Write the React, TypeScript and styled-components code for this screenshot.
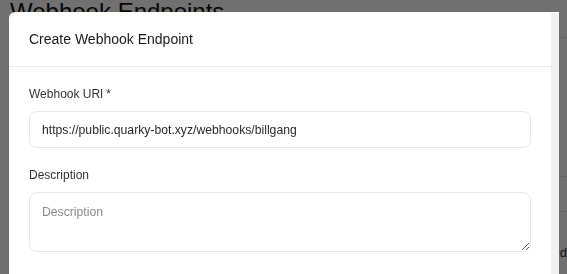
import React from "react";
import styled, { createGlobalStyle } from "styled-components";

const GlobalStyle = createGlobalStyle`
    html, body {
        margin: 0;
        padding: 0;
        background: #ffffff;
        font-family: "Liberation Sans", Arial, sans-serif;
        overflow: hidden;
    }
    * {
        box-sizing: border-box;
    }
`;

const Page = styled.div`
    width: 567px;
    height: 274px;
    padding: 0 0 0 10px;
    overflow: hidden;
    color: #111;
`;

const PageTitle = styled.h1`
    margin: 0;
    font-size: 24px;
    line-height: 24px;
    font-weight: 400;
    color: #111;
`;

const Table = styled.div`
    margin-top: 13px;
    border-top: 1px solid #e4e4e4;
`;

const TableRow = styled.div<{ $h: number }>`
    height: ${(p) => p.$h}px;
    border-bottom: 1px solid #e4e4e4;
    display: flex;
    align-items: center;
    justify-content: flex-end;
    font-size: 13px;
    color: #333;
`;

const Overlay = styled.div`
    position: fixed;
    inset: 0;
    background: rgba(0, 0, 0, 0.56);
    padding: 12px 8px 0 9px;
    overflow: hidden;
`;

const Modal = styled.div`
    width: 550px;
    height: 100%;
    display: flex;
    background: #ffffff;
    border-radius: 6px 0 0 0;
    overflow: hidden;
`;

const ModalContent = styled.div`
    flex: 1;
    min-width: 0;
`;

const ScrollTrack = styled.div`
    width: 8px;
    flex-shrink: 0;
    margin-top: 1px;
    background: #f1f1f1;
`;

const ModalHeader = styled.div`
    height: 55px;
    display: flex;
    align-items: center;
    padding: 0 20px;
    border-bottom: 1px solid #ececec;
`;

const ModalTitle = styled.h2`
    margin: 0;
    font-size: 14px;
    line-height: 20px;
    font-weight: 400;
    color: #1a1a1a;
`;

const ModalBody = styled.div`
    padding: 18px 20px 0;
    display: flex;
    flex-direction: column;
    gap: 18px;
`;

const Field = styled.div`
    display: flex;
    flex-direction: column;
    gap: 8px;
`;

const Label = styled.label`
    font-size: 12px;
    line-height: 18px;
    color: #333;
`;

const Input = styled.input`
    height: 37px;
    width: 100%;
    padding: 0 12px;
    border: 1px solid #e8e8e8;
    border-radius: 8px;
    font-family: inherit;
    font-size: 12.2px;
    color: #2b2b2b;
    background: #fff;
    outline: none;
`;

const TextArea = styled.textarea`
    height: 60px;
    width: 100%;
    padding: 9px 12px;
    border: 1px solid #e8e8e8;
    border-radius: 8px;
    font-family: inherit;
    font-size: 12.2px;
    line-height: 20px;
    color: #2b2b2b;
    background: #fff;
    outline: none;
    resize: vertical;
    display: block;

    &::placeholder {
        color: #8a8a8a;
    }
`;

function App() {
    return (
        <>
            <GlobalStyle />
            <Page>
                <PageTitle>Webhook Endpoints</PageTitle>
                <Table>
                    <TableRow $h={139} />
                    <TableRow $h={35} />
                    <TableRow $h={82}>Created</TableRow>
                </Table>
            </Page>
            <Overlay>
                <Modal>
                    <ModalContent>
                        <ModalHeader>
                            <ModalTitle>Create Webhook Endpoint</ModalTitle>
                        </ModalHeader>
                        <ModalBody>
                            <Field>
                                <Label>Webhook URl *</Label>
                                <Input defaultValue="https://public.quarky-bot.xyz/webhooks/billgang" />
                            </Field>
                            <Field>
                                <Label>Description</Label>
                                <TextArea placeholder="Description" />
                            </Field>
                        </ModalBody>
                    </ModalContent>
                    <ScrollTrack />
                </Modal>
            </Overlay>
        </>
    );
}

export default App;
